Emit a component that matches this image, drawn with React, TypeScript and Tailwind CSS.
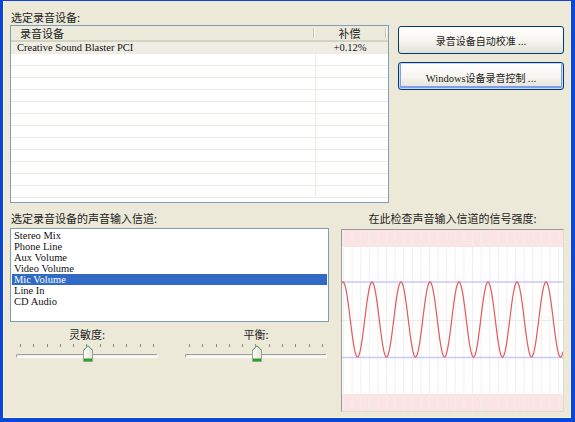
import React from "react";

const CJK = "font-['Tahoma','Noto_Sans_CJK_SC',sans-serif]";
const SERIF = "font-['Liberation_Serif','Noto_Sans_CJK_SC',serif]";

const channels = ["Stereo Mix", "Phone Line", "Aux Volume", "Video Volume", "Mic Volume", "Line In", "CD Audio"];

function Thumb() {
  return (
    <svg width="10" height="17" viewBox="0 0 10 17" className="block">
      <defs>
        <linearGradient id="tg" x1="0" y1="0" x2="1" y2="0">
          <stop offset="0" stopColor="#ffffff" />
          <stop offset="1" stopColor="#e4e3dc" />
        </linearGradient>
      </defs>
      <path d="M0.5 5 L5 0.5 L9.5 5 V16.5 H0.5 Z" fill="url(#tg)" stroke="#9a9d94" />
      <path d="M1 5 L5 1 L9 5" fill="none" stroke="#53c053" strokeWidth="1" />
      <rect x="1" y="13.5" width="8" height="2.5" fill="#21a621" />
    </svg>
  );
}

function Slider({ label }: { label: string }) {
  return (
    <div className="flex flex-col items-center w-[142px]">
      <div className={`${CJK} text-[11px] leading-[14px] text-[#222]`}>{label}</div>
      <div className="relative w-[142px] h-[22px] mt-[2px]">
        <div className="flex justify-between px-[4px] pt-[1px]">
          {Array.from({ length: 11 }).map((_, i) => (
            <div key={i} className="w-px h-[3px] bg-[#8a8a86]" />
          ))}
        </div>
        <div className="mt-[7px] h-[4px] rounded-[2px] border border-t-[#9d9c96] border-l-[#9d9c96] border-b-white border-r-white bg-[#f4f3ee]" />
        <div className="absolute left-[67px] top-[2px]">
          <Thumb />
        </div>
      </div>
    </div>
  );
}

function Chart() {
  const w = 221;
  const h = 181;
  const pts: string[] = [];
  for (let x = 0; x <= w; x += 0.5) {
    const y = 89.5 - 37.5 * Math.cos((2 * Math.PI * (x - 1)) / 29);
    pts.push(`${x.toFixed(1)},${y.toFixed(2)}`);
  }
  const vlines = [];
  for (let k = 0; k < 26; k++) vlines.push(1.5 + 8.6 * k);
  return (
    <svg width={w} height={h} className="block">
      <rect x="0" y="0" width={w} height={h} fill="#ffffff" />
      <rect x="0" y="0" width={w} height="17" fill="#fde4e4" />
      <rect x="0" y="164" width={w} height="17" fill="#fde4e4" />
      {vlines.map((x, i) => (
        <line key={i} x1={x} y1="0" x2={x} y2={h} stroke="#efefef" strokeWidth="1" />
      ))}
      <line x1="0" y1="90.5" x2={w} y2="90.5" stroke="#ebebeb" />
      <line x1="0" y1="52" x2={w} y2="52" stroke="#c8c8fc" strokeWidth="1.3" />
      <line x1="0" y1="127.5" x2={w} y2="127.5" stroke="#c8c8fc" strokeWidth="1.3" />
      <polyline points={pts.join(" ")} fill="none" stroke="#e25a5a" strokeWidth="1.2" />
    </svg>
  );
}

export default function App() {
  const rows = Array.from({ length: 13 });
  return (
    <div className="w-[575px] h-[422px] bg-[#ece9d8] border-t border-l-[3px] border-r-[4px] border-b-[4px] border-[#0a46d8] overflow-hidden">
      <div className="w-full h-full border-l border-b border-r border-[#f7f6f0] pl-[6px] pt-[9px]">
        {/* top section */}
        <div className="flex">
          <div className="w-[379px]">
            <div className={`${CJK} text-[11px] leading-[14px] text-[#222] pl-[1px]`}>选定录音设备:</div>
            <div className="mt-[1px] h-[178px] border border-[#7f9db9] bg-white overflow-hidden">
              {/* header */}
              <div className="flex h-[16px] bg-[#ebeadb] border-b-[2px] border-[#d6d2c2] shadow-[0_1px_0_#cbc7b8]">
                <div className={`${CJK} w-[302px] text-[11px] leading-[14px] text-[#222] pl-[9px]`}>录音设备</div>
                <div className="w-px my-[2px] bg-[#c7c5b2] shadow-[1px_0_0_#ffffff]" />
                <div className={`${CJK} w-[71px] text-[11px] leading-[14px] text-[#222] text-center`}>补偿</div>
                <div className="w-px my-[2px] bg-[#c7c5b2] shadow-[1px_0_0_#ffffff]" />
              </div>
              {rows.map((_, i) => (
                <div key={i} className={`flex h-[12px] border-b border-[#eeece2] ${i === 0 ? "bg-[#f0eee4]" : ""}`}>
                  <div className={`${SERIF} w-[305px] border-r border-[#eeece2] text-[10.5px] leading-[11px] text-[#111] pl-[6px] whitespace-nowrap`}>
                    {i === 0 ? "Creative Sound Blaster PCI" : ""}
                  </div>
                  <div className={`${SERIF} w-[68px] text-[10.5px] leading-[11px] text-[#111] text-center`}>
                    {i === 0 ? "+0.12%" : ""}
                  </div>
                </div>
              ))}
            </div>
          </div>
          <div className="ml-[9px] mt-[16px] flex flex-col gap-[8px]">
            <button className={`${CJK} w-[166px] h-[28px] rounded-[3px] border border-[#003c74] bg-gradient-to-b from-white via-[#f7f6f1] to-[#e3e1d6] text-[10px] text-[#222]`}>
              录音设备自动校准 ...
            </button>
            <button className="w-[166px] h-[28px] rounded-[3px] border border-[#003c74] bg-gradient-to-b from-white via-[#f7f6f1] to-[#e3e1d6] shadow-[inset_0_0_0_1px_#c5d6f8,inset_0_-1px_0_2px_#7d9ee9] text-[#222]">
              <span className={`${SERIF} text-[10.5px]`}>Windows</span>
              <span className={`${CJK} text-[10px]`}>设备录音控制 ...</span>
            </button>
          </div>
        </div>

        {/* bottom section */}
        <div className="flex mt-[8px]">
          <div className="w-[319px]">
            <div className={`${CJK} text-[11px] leading-[14px] text-[#222] pl-[1px]`}>选定录音设备的声音输入信道:</div>
            <div className="mt-[3px] h-[94px] border border-[#7f9db9] bg-white pt-[1px] pl-px pr-px">
              {channels.map((c, i) => (
                <div
                  key={c}
                  className={`${SERIF} h-[11px] text-[10.5px] leading-[11px] pl-[2px] whitespace-nowrap ${i === 4 ? "bg-[#316ac5] text-white" : "text-[#111]"}`}
                >
                  {c}
                </div>
              ))}
            </div>
            <div className="flex mt-[5px] pl-[6px] gap-[27px]">
              <Slider label="灵敏度:" />
              <Slider label="平衡:" />
            </div>
          </div>
          <div className="ml-[12px] w-[223px]">
            <div className={`${CJK} text-[11px] leading-[14px] text-[#222] text-center`}>在此检查声音输入信道的信号强度:</div>
            <div className="mt-[4px] border border-t-[#9a9a96] border-l-[#9a9a96] border-b-[#dedbd0] border-r-[#dedbd0]">
              <Chart />
            </div>
          </div>
        </div>
      </div>
    </div>
  );
}
